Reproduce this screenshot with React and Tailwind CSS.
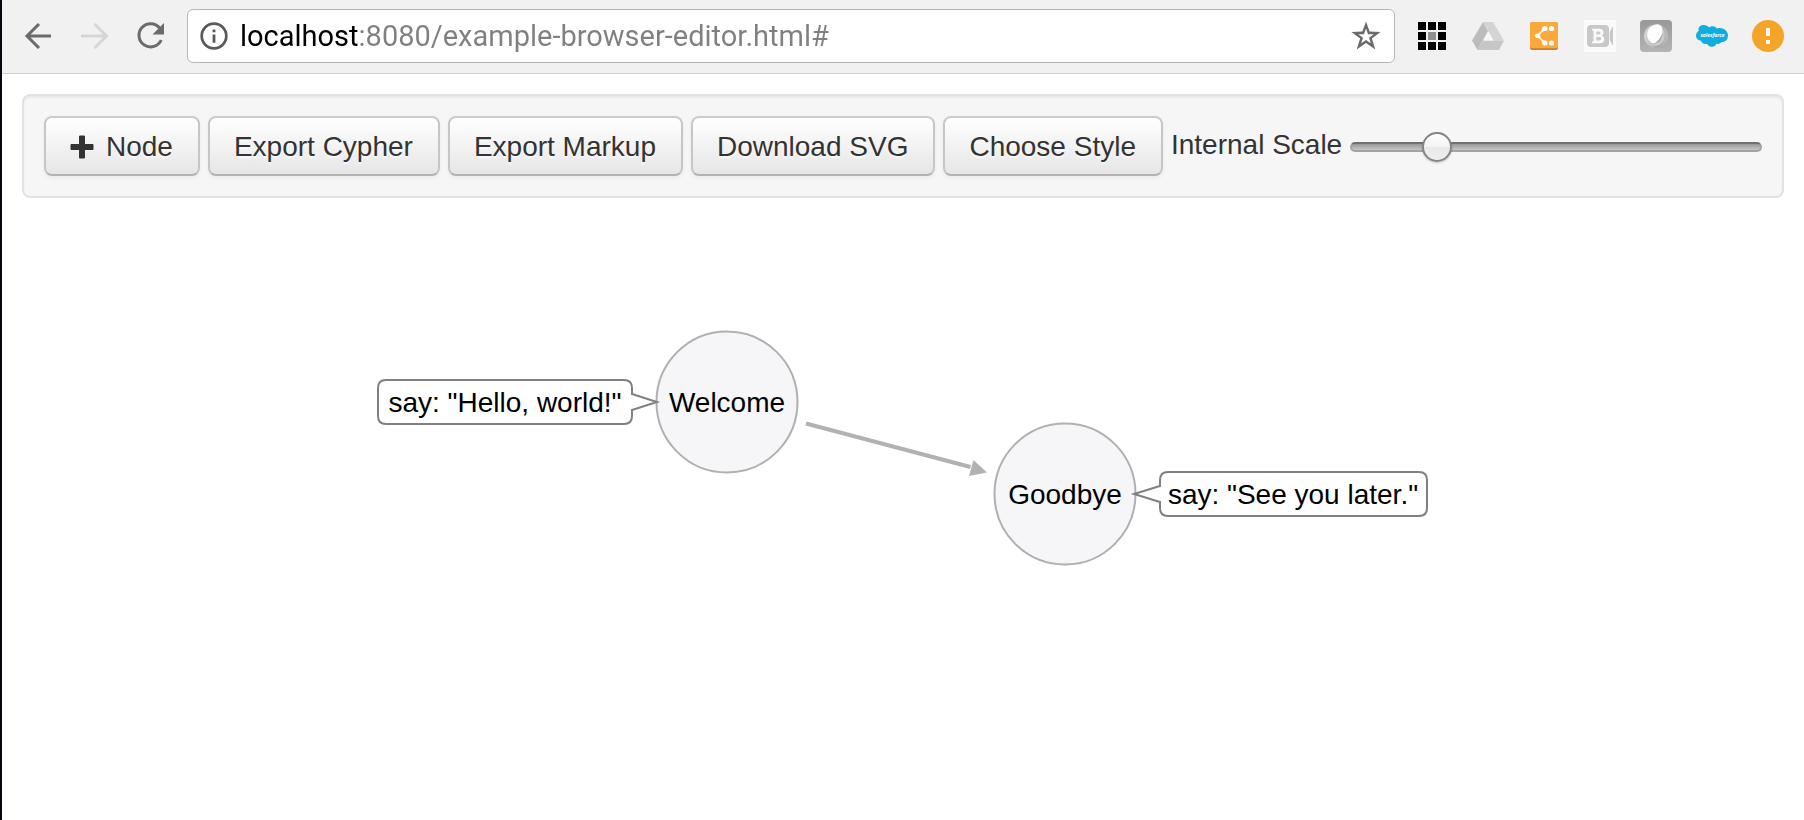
import { useState } from "react";

const URL_TEXT = "localhost:8080/example-browser-editor.html#";

const iconButton = "flex size-8 shrink-0 items-center justify-center";

const toolButton =
  "flex h-[60px] shrink-0 items-center gap-3 rounded-lg border-2 border-t-[#cccccc] border-x-[#c6c6c6] border-b-[#b3b3b3] bg-linear-to-b from-white to-[#e6e6e6] pt-[2px] pr-[25px] pl-6 text-[28px] leading-10 whitespace-nowrap text-[#333333] shadow-[0_2px_4px_rgba(0,0,0,0.05)] [text-shadow:0_2px_2px_rgba(255,255,255,0.75)]";

function ArrowIcon({ className, flipped }) {
  return (
    <svg viewBox="0 0 32 32" className={className} fill="none" stroke="currentColor" strokeWidth="3">
      {flipped ? (
        <path d="M3 16H28M16.500 4L28.500 16L16.500 28" />
      ) : (
        <path d="M29 16H4.500M17 4L5 16L17 28" />
      )}
    </svg>
  );
}

function ReloadIcon() {
  return (
    <svg viewBox="0 0 32 32" className="size-8 text-[#6b6b6b]">
      <path d="M25.600 8A11.600 11.600 0 1 0 27.200 20" fill="none" stroke="currentColor" strokeWidth="3" />
      <path d="M30 3V14.500H18.500Z" fill="currentColor" />
    </svg>
  );
}

function GridIcon() {
  const cells = [0, 10, 20];
  return (
    <svg viewBox="0 0 28 28" className="size-7">
      {cells.map((y) =>
        cells.map((x) => (
          <rect key={`${x}-${y}`} x={x} y={y} width="8" height="8" fill={x === 10 && y === 10 ? "#8f8f8f" : "#000"} />
        ))
      )}
    </svg>
  );
}

function DriveIcon() {
  return (
    <svg viewBox="0 0 32 32" className="size-8">
      <path d="M11 2L16 11L5.500 30L0 20.500Z" fill="#bcbcbc" />
      <path d="M11 2H21L32 20.500H21.500Z" fill="#d4d4d4" />
      <path d="M11 20.500H32L27 30H5.500Z" fill="#c6c6c6" />
      <path d="M16.500 11.500L21.500 20.500H11.500Z" fill="#f7f7f7" />
    </svg>
  );
}

function ShareIcon() {
  return (
    <svg viewBox="0 0 28 28" className="size-7">
      <rect width="28" height="28" rx="2.500" fill="#c9812c" />
      <rect width="28" height="26.300" rx="2.500" fill="#fba93a" />
      <path
        d="M12.500 5.500Q12 10.500 4 13.800Q12 16.500 12.500 21.500L15.500 19.500Q10.500 17.500 10 13.800Q10.500 10 15.500 8.500Z"
        fill="#fff"
      />
      <g fill="#fff">
        <circle cx="7.300" cy="13.800" r="2.400" />
        <circle cx="15" cy="6.500" r="2.600" />
        <circle cx="21.500" cy="6.500" r="2.600" />
        <circle cx="15" cy="21" r="2.600" />
        <circle cx="21.500" cy="21" r="2.600" />
      </g>
    </svg>
  );
}

function CameraIcon() {
  return (
    <svg viewBox="0 0 32 32" className="size-8">
      <rect width="32" height="32" fill="#fafafa" />
      <rect x="3" y="5" width="22" height="22" rx="4" fill="#c8c8c8" />
      <path d="M25.700 12L29 6V26L25.700 20Z" fill="#c8c8c8" />
      <path
        d="M8 8.700H15.500Q19.500 8.700 19.500 12.500Q19.500 14.800 17.800 15.700Q20.300 16.600 20.300 19.300Q20.300 23.300 16 23.300H8V21.500H9.500V10.500H8ZM12.300 11.500V14.600H14.800Q16.500 14.600 16.500 13Q16.500 11.500 14.800 11.500ZM12.300 17.100V20.500H15.200Q17.200 20.500 17.200 18.800Q17.200 17.100 15.200 17.100Z"
        fill="#fafafa"
        fillRule="evenodd"
      />
    </svg>
  );
}

function OrbIcon() {
  return (
    <svg viewBox="0 0 32 32" className="size-8">
      <defs>
        <linearGradient id="orb-tile" x1="0" y1="0" x2="0" y2="1">
          <stop offset="0" stopColor="#989898" />
          <stop offset="1" stopColor="#b4b4b4" />
        </linearGradient>
        <linearGradient id="orb-ring" x1="0" y1="0" x2="1" y2="0">
          <stop offset="0" stopColor="#d6d6d6" />
          <stop offset="0.600" stopColor="#a4a4a4" />
          <stop offset="1" stopColor="#bdbdbd" />
        </linearGradient>
      </defs>
      <rect width="32" height="32" rx="4" fill="url(#orb-tile)" />
      <circle cx="16" cy="16" r="12" fill="url(#orb-ring)" />
      <path d="M7 21Q14 27 20 21Q24 16 22 9Q25 11 24.500 17Q23 25 16 26Q10 26 7 21Z" fill="#cccccc" />
      <path d="M14 5Q20 3 22 7Q24 13 19 19.500Q14 26 9.500 21Q6 17 7.500 11.500Q9 6.500 14 5Z" fill="#fdfdfd" />
    </svg>
  );
}

function SalesforceIcon() {
  return (
    <svg viewBox="0 0 32 24" className="h-6 w-8">
      <path
        d="M13.300 3.600C14.300 2.500 15.800 2 17.300 2.300C19 2.500 20 3.300 20.700 4.400C21.500 4 22.500 3.800 23.500 4C28 4 32 7 32 11.500C32 15.500 29 18.500 25.300 18C24.500 19.600 22.500 20.400 20.500 19.800C19.500 22 17.500 23 15.500 22.700C13.300 22.700 11.800 21.500 11 19.800C8 20.500 5.500 19 4.800 16.600C2 16.500 0 14.300 0 11.800C0 9.500 1 8 2.700 7C1.700 3.500 4.300 1 7.500 1C10 1 12 2 13.300 3.600Z"
        fill="#12addf"
      />
      <text x="16.500" y="13" textAnchor="middle" fill="#fff" fontSize="5" fontStyle="italic" fontWeight="700" fontFamily="Open Sans, sans-serif">
        salesforce
      </text>
    </svg>
  );
}

function AlertIcon() {
  return (
    <svg viewBox="0 0 32 32" className="size-8">
      <circle cx="16" cy="16" r="16" fill="#f4a427" />
      <path d="M14 8H18V16H14ZM14 20H18V24H14Z" fill="#fff" />
    </svg>
  );
}

const extensions = [
  ["Apps", GridIcon],
  ["Drive", DriveIcon],
  ["Share", ShareIcon],
  ["Record", CameraIcon],
  ["Orb", OrbIcon],
  ["Salesforce", SalesforceIcon],
  ["Alerts", AlertIcon],
];

function BrowserBar() {
  const [url, setUrl] = useState(URL_TEXT);
  return (
    <header className="flex h-[74px] items-center gap-[21px] border-b border-[#d0d0d0] bg-[#f1f1f1] px-5 pb-px">
      <nav className="flex gap-6">
        <button aria-label="Back" className={iconButton}>
          <ArrowIcon className="size-8 text-[#6b6b6b]" />
        </button>
        <button aria-label="Forward" className={iconButton}>
          <ArrowIcon flipped className="size-8 text-[#d6d6d6]" />
        </button>
        <button aria-label="Reload" className={iconButton}>
          <ReloadIcon />
        </button>
      </nav>
      <div className="flex h-[54px] min-w-0 flex-1 items-center gap-3 rounded-md border border-[#b6b6b6] bg-white px-3">
        <button aria-label="Site information" className="shrink-0">
          <svg viewBox="0 0 28 28" className="size-7">
            <circle cx="14" cy="14" r="12.300" fill="none" stroke="#5a5a5a" strokeWidth="2.700" />
            <path d="M12.600 7.500H15.400V10.300H12.600ZM12.600 12.600H15.400V20.700H12.600Z" fill="#5a5a5a" />
          </svg>
        </button>
        <input
          type="text"
          aria-label="Address"
          value={url}
          onChange={(e) => setUrl(e.target.value)}
          className="min-w-0 flex-1 bg-[linear-gradient(to_right,#000_118px,#808080_118px)] bg-clip-text font-[Roboto,sans-serif] text-[29px] leading-9 text-transparent caret-black outline-none"
        />
        <button aria-label="Bookmark" className={iconButton}>
          <svg viewBox="0 0 32 32" className="size-8">
            <path
              d="M16 1.500L19.600 11.600L30.600 11.900L21.900 18.500L25.300 29.500L16 23L6.700 29.500L10.100 18.500L1.400 11.900L12.400 11.600ZM16 8.500L14 14.200L8.300 14.300L13 17.800L11.200 23.200L16 19.900L20.800 23.200L19 17.800L23.700 14.300L18 14.200Z"
              fill="#6b6b6b"
              fillRule="evenodd"
            />
          </svg>
        </button>
      </div>
      <div className="flex gap-6">
        {extensions.map(([name, Icon]) => (
          <button key={name} aria-label={name} className={iconButton}>
            <Icon />
          </button>
        ))}
      </div>
    </header>
  );
}

function Toolbar() {
  const [scale, setScale] = useState(1);
  return (
    <div className="flex items-center gap-2 rounded-lg border-2 border-[#e2e2e2] bg-[#f6f6f6] p-5 shadow-[inset_0_2px_2px_rgba(0,0,0,0.05)]">
      <button className={toolButton}>
        <svg viewBox="0 0 24 24" className="size-6">
          <path d="M9.500 1H14.500V9.500H23V14.500H14.500V23H9.500V14.500H1V9.500H9.500Z" fill="#333" stroke="#333" />
        </svg>
        Node
      </button>
      <button className={toolButton}>Export Cypher</button>
      <button className={toolButton}>Export Markup</button>
      <button className={toolButton}>Download SVG</button>
      <button className={toolButton}>Choose Style</button>
      <label htmlFor="internal-scale" className="shrink-0 pb-[2px] text-[28px] leading-10 text-[#333333]">
        Internal Scale
      </label>
      <input
        id="internal-scale"
        type="range"
        min="0.1"
        max="5"
        step="0.01"
        value={scale}
        onChange={(e) => setScale(Number(e.target.value))}
        className="mt-[2px] h-[30px] min-w-0 flex-1 appearance-none bg-transparent [&::-webkit-slider-runnable-track]:h-[10px] [&::-webkit-slider-runnable-track]:rounded-[5px] [&::-webkit-slider-runnable-track]:border-2 [&::-webkit-slider-runnable-track]:border-[#a3a3a3] [&::-webkit-slider-runnable-track]:border-t-[#707070] [&::-webkit-slider-runnable-track]:bg-linear-to-b [&::-webkit-slider-runnable-track]:from-[#999999] [&::-webkit-slider-runnable-track]:to-[#c6c6c6] [&::-webkit-slider-thumb]:-mt-3 [&::-webkit-slider-thumb]:size-[30px] [&::-webkit-slider-thumb]:appearance-none [&::-webkit-slider-thumb]:rounded-full [&::-webkit-slider-thumb]:border-2 [&::-webkit-slider-thumb]:border-[#858585] [&::-webkit-slider-thumb]:bg-[linear-gradient(#fdfdfd,#f4f4f4_50%,#e9e9e9_50%,#efefef)] [&::-webkit-slider-thumb]:shadow-[0_1px_2px_rgba(0,0,0,0.2)]"
      />
    </div>
  );
}

function Diagram() {
  return (
    <svg viewBox="0 0 1052 236" className="w-[1052px] max-w-full text-[28px]">
      <g fill="#f6f6f9" stroke="#b0b0b0" strokeWidth="2">
        <circle cx="350" cy="72" r="70.500" />
        <circle cx="688" cy="164" r="70.500" />
      </g>
      <g fill="#b2b2b2">
        <path d="M429.500 91.500L594 135L593 139L428.500 95.500Z" />
        <path d="M596.500 130L610 142.500L592 146Z" />
      </g>
      <g fill="#fff" stroke="#808080" strokeWidth="2">
        <path d="M9 50H247Q255 50 255 58V64L280 72L255 80V86Q255 94 247 94H9Q1 94 1 86V58Q1 50 9 50Z" />
        <path d="M791 142H1042Q1050 142 1050 150V178Q1050 186 1042 186H791Q783 186 783 178V172L757 164L783 156V150Q783 142 791 142Z" />
      </g>
      <g fill="#000">
        <text x="350" y="82" textAnchor="middle">Welcome</text>
        <text x="688" y="174" textAnchor="middle">Goodbye</text>
        <text x="128" y="82" textAnchor="middle">say: "Hello, world!"</text>
        <text x="916" y="174" textAnchor="middle">say: "See you later."</text>
      </g>
    </svg>
  );
}

export default function App() {
  return (
    <div className="min-h-screen border-l-2 border-[#06060f] bg-white font-['Liberation_Sans',Arial,sans-serif]">
      <BrowserBar />
      <main className="p-5">
        <Toolbar />
        <section aria-label="Graph" className="flex justify-center pt-[132px]">
          <Diagram />
        </section>
      </main>
    </div>
  );
}
